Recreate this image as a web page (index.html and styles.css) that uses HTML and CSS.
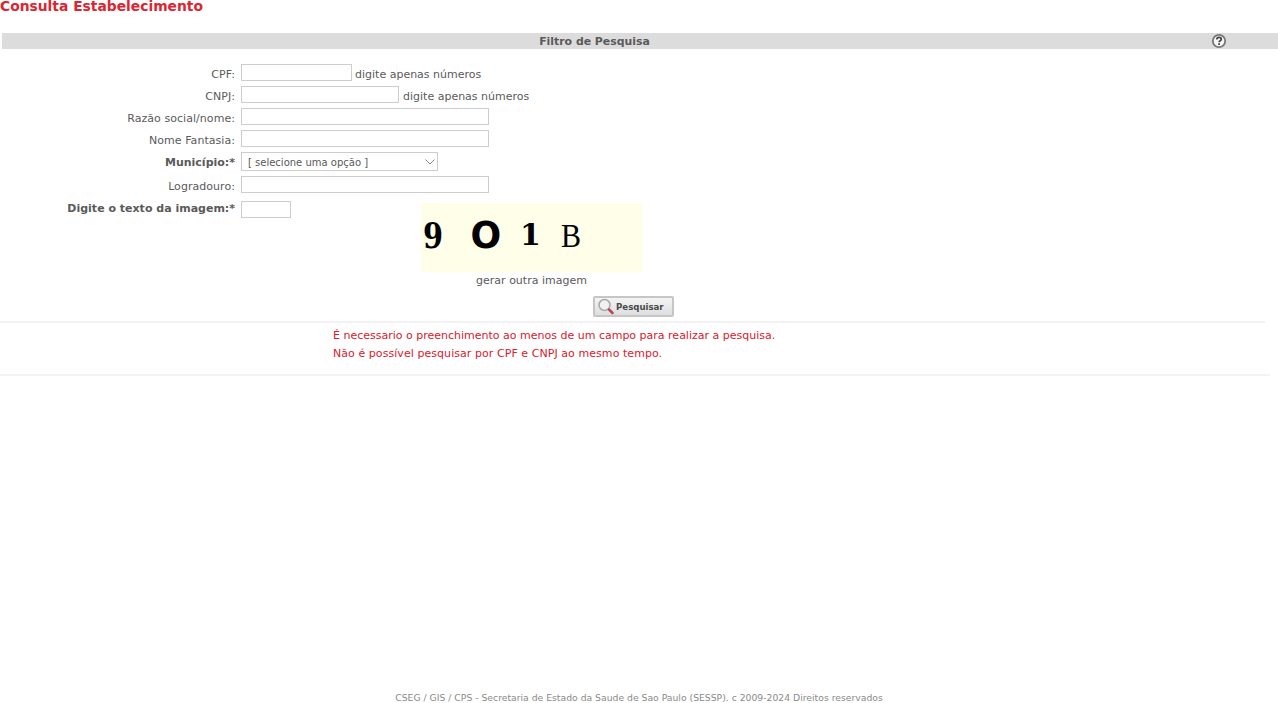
FILE: index.html
```html
<!DOCTYPE html>
<html lang="pt-BR">
<head>
<meta charset="utf-8">
<title>Consulta Estabelecimento</title>
<link rel="stylesheet" href="styles.css">
</head>
<body>
<div class="page">
  <h1 class="title">Consulta Estabelecimento</h1>
  <div class="bar">
    <span class="bar-title">Filtro de Pesquisa</span>
    <svg class="help" width="16" height="16" viewBox="0 0 16 16" aria-hidden="true">
      <circle cx="8" cy="8" r="6.200" fill="#f6f6f6" stroke="#777" stroke-width="1.800"/>
      <path d="M5.800 6.400c0-1.400 1-2.100 2.300-2.100s2.200.8 2.200 1.900c0 1.500-2.200 1.500-2.200 3" fill="none" stroke="#444" stroke-width="1.700"/>
      <rect x="7.200" y="10.300" width="1.800" height="1.700" fill="#444"/>
    </svg>
  </div>
  <form class="form">
    <div class="row"><label class="lbl">CPF:</label><input class="inp w-cpf" type="text"><span class="hint hint-cpf">digite apenas números</span></div>
    <div class="row"><label class="lbl">CNPJ:</label><input class="inp w-cnpj" type="text"><span class="hint">digite apenas números</span></div>
    <div class="row"><label class="lbl">Razão social/nome:</label><input class="inp w-long" type="text"></div>
    <div class="row"><label class="lbl">Nome Fantasia:</label><input class="inp w-long" type="text"></div>
    <div class="row r-sel"><label class="lbl strong">Município:*</label>
      <div class="sel"><span class="sel-text">[ selecione uma opção ]</span>
        <svg width="12" height="8" viewBox="0 0 12 8" aria-hidden="true"><path d="M1.500 1.500 6 6l4.500-4.500" fill="none" stroke="#888" stroke-width="1"/></svg>
      </div>
    </div>
    <div class="row r-log"><label class="lbl">Logradouro:</label><input class="inp w-long" type="text"></div>
    <div class="row r-cap"><label class="lbl strong lbl-cap">Digite o texto da imagem:*</label><input class="inp w-cap" type="text"></div>
    <div class="captcha-wrap">
      <div class="captcha"><span class="c1">9</span><span class="c2">O</span><span class="c3">1</span><span class="c4">B</span></div>
      <a class="regen">gerar outra imagem</a>
    </div>
    <div class="actions">
      <button class="btn" type="button">
        <svg width="18" height="18" viewBox="0 0 18 18" aria-hidden="true">
          <circle cx="7.500" cy="7" r="5.500" fill="#eef2f5" stroke="#a8a8a8" stroke-width="1.500"/>
          <path d="M12 11.500l3.500 3.500" stroke="#b8455c" stroke-width="2.500" stroke-linecap="round"/>
        </svg>
        <span class="btn-text">Pesquisar</span>
      </button>
    </div>
  </form>
  <div class="msgs">
    <p>É necessario o preenchimento ao menos de um campo para realizar a pesquisa.</p>
    <p class="msg-two">Não é possível pesquisar por CPF e CNPJ ao mesmo tempo.</p>
  </div>
  <footer class="foot">CSEG / GIS / CPS - Secretaria de Estado da Saude de Sao Paulo (SESSP). c 2009-2024 Direitos reservados</footer>
</div>
</body>
</html>
```
FILE: styles.css
```css
* { box-sizing: border-box; }
html, body { margin: 0; padding: 0; background: #fff; }
body { font-family: "DejaVu Sans", Verdana, sans-serif; font-size: 11px; color: #5a5a5a; overflow: hidden; }
.page { height: 703px; display: flex; flex-direction: column; }
.title { margin: 0; height: 33px; font-size: 13.850px; line-height: 12px; font-weight: 700; color: #dc2530; }
.bar { height: 16px; margin-left: 2px; background: #dcdcdc; position: relative; display: flex; align-items: center; justify-content: center; padding-right: 91px; font-weight: 700; font-size: 10.900px; color: #5a5a5a; }
.help { position: absolute; left: 1209px; top: 0; }
.form { padding-top: 15px; display: flex; flex-direction: column; }
.row { display: flex; align-items: flex-start; height: 22px; }
.r-sel { height: 24px; }
.r-log { height: 25px; }
.r-cap { height: 2px; }
.lbl { width: 235px; margin-right: 6px; text-align: right; line-height: 14px; padding-top: 4px; flex: none; letter-spacing: .05px; }
.lbl-cap { padding-top: 1px; }
.strong { font-weight: 700; letter-spacing: 0; }
.inp { height: 17px; border: 1px solid #cdcdcd; background: #fff; padding: 0; margin: 0; outline: none; display: block; }
.w-cpf { width: 111px; }
.w-cnpj { width: 158px; }
.w-long { width: 248px; }
.w-cap { width: 50px; }
.hint { margin-left: 4px; padding-top: 4px; line-height: 14px; }
.hint-cpf { margin-left: 3px; }
.sel { width: 197px; height: 19px; border: 1px solid #cdcdcd; display: flex; align-items: center; justify-content: space-between; padding: 0 1px 0 6px; font-size: 10px; color: #5a5a5a; }
.sel-text { padding-top: 1px; }
.captcha-wrap { margin-left: 421px; width: 221px; display: flex; flex-direction: column; align-items: center; }
.captcha { width: 221px; height: 69px; background: #fffee8; color: #000; font-family: "DejaVu Serif", "Liberation Serif", serif; display: flex; align-items: center; position: relative; }
.captcha span { display: block; line-height: 1; width: 20px; text-align: center; flex: none; }
.c1 { font-size: 36px; font-weight: 700; margin-left: 0; transform: translateY(-3px) scaleX(.8); }
.c2 { font-family: "DejaVu Sans", sans-serif; font-size: 38px; font-weight: 700; margin-left: 29px; transform: translateY(-3px) scaleX(.95); }
.c3 { font-size: 30px; font-weight: 700; margin-left: 30px; transform: translateY(-3px); }
.c4 { font-size: 30px; font-family: "Liberation Serif", serif; margin-left: 21px; transform: translateY(-3px) scale(1, 1.150); }
.regen { margin-top: 2px; line-height: 14px; color: #5a5a5a; }
.actions { display: flex; margin-left: 593px; margin-top: 8px; height: 25px; }
.btn { width: 81px; height: 21px; padding: 0 0 0 2px; border: 2px solid #c6c6c6; border-radius: 2px; background: linear-gradient(#f4f4f4, #dedede); display: flex; align-items: center; font-family: inherit; font-size: 8.600px; font-weight: 700; color: #4a4a4a; }
.btn-text { margin-left: 1px; }
.msgs { width: 1265px; height: 55px; border-top: 2px solid #f3f3f3; padding: 4px 0 0 333px; color: #d8202b; position: relative; }
.msgs p { margin: 0; line-height: 18px; }
.msg-two { letter-spacing: .06px; }
.msgs::after { content: ""; position: absolute; left: 0; right: -5px; bottom: 0; height: 2px; background: #f3f3f3; }
.foot { margin-top: auto; height: 11px; text-align: center; font-size: 9.250px; line-height: 11px; color: #8a8a8a; }
```
